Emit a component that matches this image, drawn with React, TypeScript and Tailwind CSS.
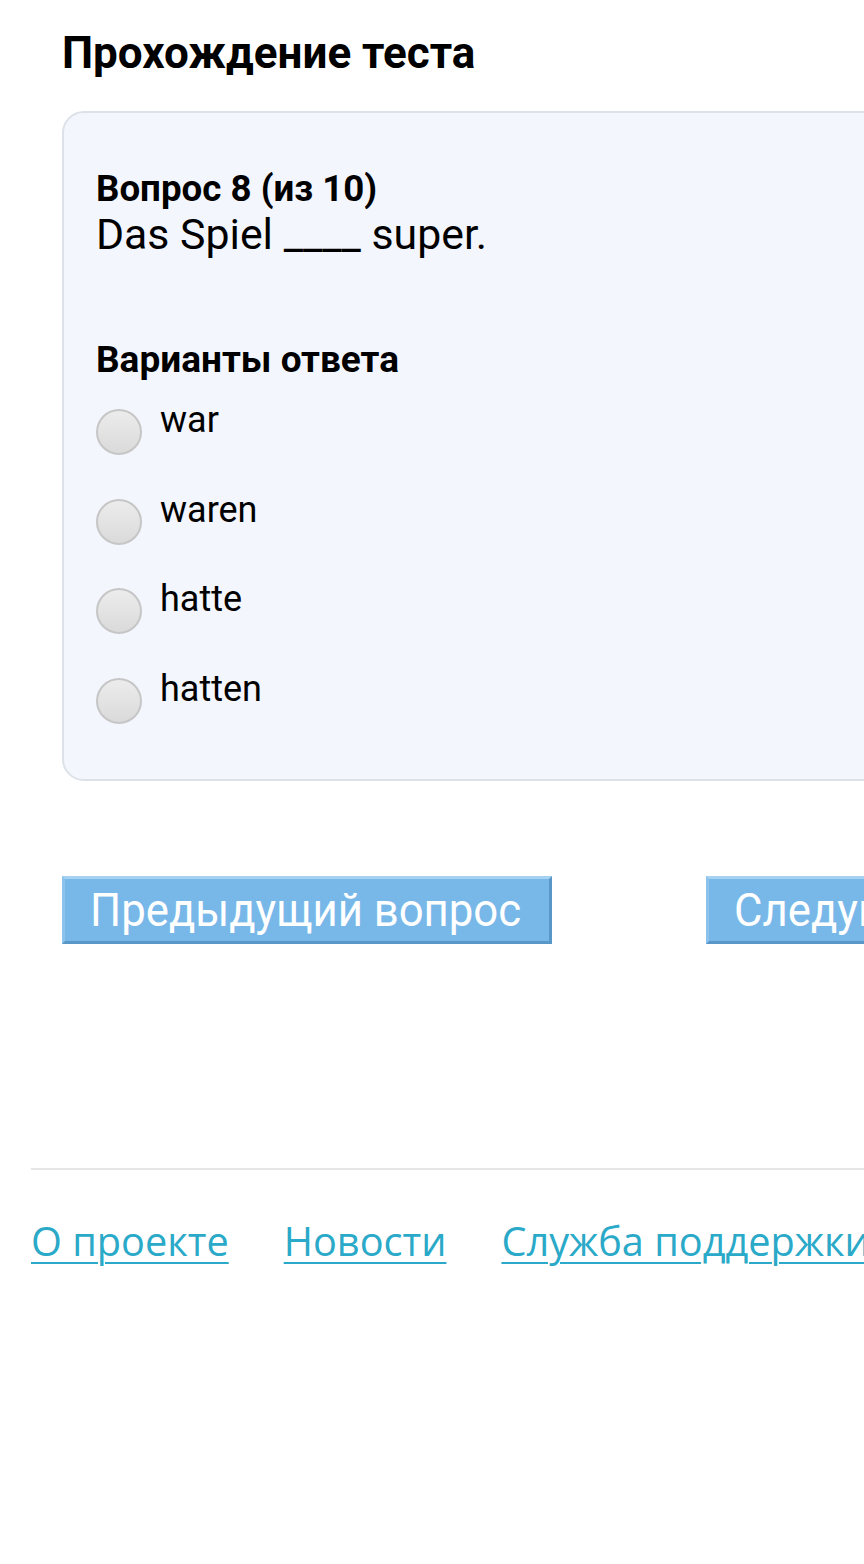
import React from 'react';

const options = ['war', 'waren', 'hatte', 'hatten'];

function Radio() {
  return (
    <span className="mt-[9px] block h-[46px] w-[46px] shrink-0 rounded-full border-2 border-[#c6c6c6] bg-gradient-to-b from-[#ececec] to-[#dadada]" />
  );
}

function NavButton({ label }: { label: string }) {
  return (
    <button
      type="button"
      className="h-[68px] w-[490px] shrink-0 overflow-hidden border-[3px] border-t-[#a6d2f2] border-l-[#8cc3ec] border-r-[#5a97c9] border-b-[#5a97c9] bg-[#78b8e9] pl-[25px] text-left text-white"
    >
      <span className="inline-block origin-left scale-x-[0.95] whitespace-nowrap text-[46px] leading-none">{label}</span>
    </button>
  );
}

export default function App() {
  return (
    <div
      className="h-[1564px] w-[864px] overflow-hidden bg-white text-black"
      style={{ fontFamily: 'Roboto, "Noto Sans", sans-serif' }}
    >
      <div className="w-[1200px] pl-[62px] pt-[27px]">
        <h1 className="text-[44px] font-bold leading-[52px]">Прохождение теста</h1>

        <div className="mt-[32px] h-[670px] rounded-[22px] border-2 border-[#dde2e9] bg-[#f3f6fd] px-[32px] pt-[55px]">
          <p className="text-[36.7px] font-bold leading-[42px]">Вопрос 8 (из 10)</p>
          <p className="text-[42.8px] leading-[48px]">Das Spiel ____ super.</p>

          <p className="mt-[80px] text-[37px] font-bold leading-[44px]">Варианты ответа</p>
          <div className="mt-[18px] flex flex-col">
            {options.map((o) => (
              <label key={o} className="flex h-[89.5px] items-start gap-[18px]">
                <Radio />
                <span className="text-[36px] leading-[40px]">{o}</span>
              </label>
            ))}
          </div>
        </div>

        <div className="mt-[95px] flex gap-[154px]">
          <NavButton label="Предыдущий вопрос" />
          <NavButton label="Следующий вопрос" />
        </div>
      </div>

      <div className="mt-[224px] w-[1200px] pl-[31px]">
        <div className="h-[2px] bg-[#e6e6e6]" />
        <div
          className="mt-[43px] flex gap-[55px] text-[39.7px] leading-[56px] text-[#2aa9c8]"
          style={{ fontFamily: '"Open Sans", sans-serif' }}
        >
          <a href="#" className="underline decoration-2 underline-offset-[6px]">О проекте</a>
          <a href="#" className="underline decoration-2 underline-offset-[6px]">Новости</a>
          <a href="#" className="underline decoration-2 underline-offset-[6px]">Служба поддержки</a>
        </div>
      </div>
    </div>
  );
}
